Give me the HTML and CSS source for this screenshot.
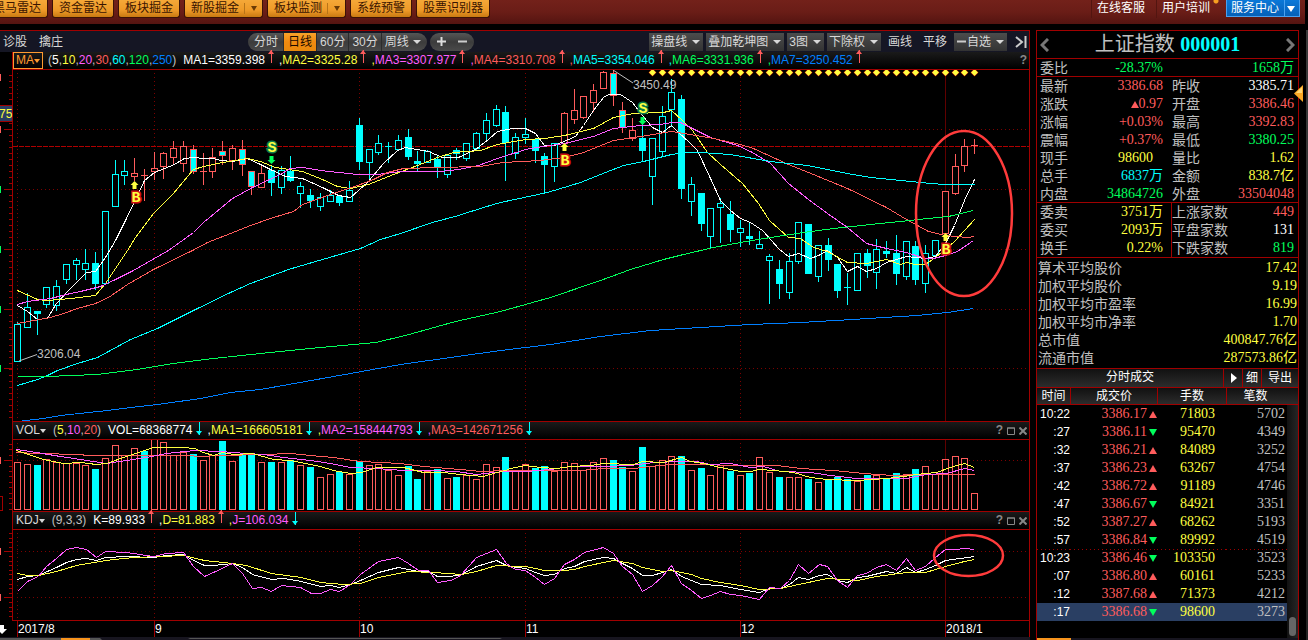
FILE: index.html
```html
<!DOCTYPE html>
<html lang="zh-CN">
<head>
<meta charset="utf-8">
<title>上证指数 000001</title>
<link rel="stylesheet" href="styles.css">
</head>
<body>
<header class="topbar">
  <nav class="tools">
    <button class="gold">黑马雷达</button>
    <button class="gold">资金雷达</button>
    <button class="gold">板块掘金</button>
    <button class="gold split">新股掘金<i class="caret"></i></button>
    <button class="gold split">板块监测<i class="caret"></i></button>
    <button class="gold">系统预警</button>
    <button class="gold">股票识别器</button>
  </nav>
  <nav class="account">
    <a href="#">在线客服</a>
    <a href="#" class="has-dot">用户培训</a>
    <button class="service">服务中心<i class="caret"></i></button>
  </nav>
</header>
<div class="workspace">
  <main class="charts">
    <div class="toolbar">
      <a href="#">诊股</a>
      <a href="#">擒庄</a>
      <div class="pill periods">
        <button>分时</button><button class="on">日线</button><button>60分</button><button>30分</button><button>周线<i class="caret"></i></button>
      </div>
      <div class="pill zoomers">
        <button aria-label="放大"><svg width="9" height="9"><path d="M0 4.5h9M4.5 0v9" stroke="#ddd" stroke-width="2"/></svg></button>
        <button aria-label="缩小"><svg width="9" height="9"><path d="M0 4.5h9" stroke="#ccc" stroke-width="2"/></svg></button>
      </div>
      <div class="options">
        <button class="drop">操盘线<i class="caret"></i></button>
        <button class="drop">叠加乾坤图<i class="caret"></i></button>
        <button class="drop">3图<i class="caret"></i></button>
        <button class="drop">下除权<i class="caret"></i></button>
        <a href="#">画线</a>
        <a href="#">平移</a>
        <button class="drop tight"><svg width="9" height="9"><path d="M0 4.5h9" stroke="#ccc" stroke-width="2"/></svg>自选<i class="caret"></i></button>
        <button class="collapse" aria-label="收起"><svg width="12" height="12"><path d="M1 1l6 5-6 5M10.500 0v12" fill="none" stroke="#ccc" stroke-width="2"/></svg></button>
      </div>
    </div>

    <div class="indicator first">
      <button class="name boxed">MA<i class="caret"></i></button>
      <span class="params">(<b class="w">5</b>,<b class="y">10</b>,<b class="m">20</b>,<b class="r">30</b>,<b class="c">60</b>,<b class="g">120</b>,<b class="b">250</b>)</span>
      <span class="values"><span class="w">MA1=3359.398<i class="up"></i>,</span><span class="y">MA2=3325.28<i class="up"></i>,</span><span class="m">MA3=3307.977<i class="up"></i>,</span><span class="r">MA4=3310.708<i class="up"></i>,</span><span class="c">MA5=3354.046<i class="up"></i>,</span><span class="g">MA6=3331.936<i class="up"></i>,</span><span class="b">MA7=3250.452<i class="up"></i></span></span>
      <span class="panel-tools"><button>?</button></span>
    </div>
    <svg class="plot" id="price" viewBox="0 70 1030 351"></svg>

    <div class="indicator">
      <button class="name">VOL<i class="caret"></i></button>
      <span class="params">(<b class="y">5</b>,<b class="m">10</b>,<b class="r">20</b>)</span>
      <span class="values"><span class="w">VOL=68368774<i class="down"></i>,</span><span class="y">MA1=166605181<i class="down"></i>,</span><span class="m">MA2=158444793<i class="down"></i>,</span><span class="r">MA3=142671256<i class="down"></i></span></span>
      <span class="panel-tools"><button>?</button><button aria-label="最大化"><svg width="8" height="8"><path d="M.5 1h7v6.500h-7zM0 1h8" fill="none" stroke="#888"/></svg></button><button aria-label="关闭"><svg width="8" height="8"><path d="M0.500 .5l7 7M7.500 .5l-7 7" stroke="#888" stroke-width="2"/></svg></button></span>
    </div>
    <svg class="plot" id="volume" viewBox="0 440 1030 71"></svg>

    <div class="indicator">
      <button class="name">KDJ<i class="caret"></i></button>
      <span class="params">(9,3,3)</span>
      <span class="values"><span class="w">K=89.933<i class="up"></i>,</span><span class="y">D=81.883<i class="up"></i>,</span><span class="m">J=106.034<i class="down"></i></span></span>
      <span class="panel-tools"><button>?</button><button aria-label="最大化"><svg width="8" height="8"><path d="M.5 1h7v6.500h-7zM0 1h8" fill="none" stroke="#888"/></svg></button><button aria-label="关闭"><svg width="8" height="8"><path d="M0.500 .5l7 7M7.500 .5l-7 7" stroke="#888" stroke-width="2"/></svg></button></span>
    </div>
    <svg class="plot" id="kdj" viewBox="0 530 1030 90"></svg>
    <svg class="plot" id="dates" viewBox="0 620 1030 17"></svg>
    <svg class="plot" viewBox="0 0 1030 3"><path fill="#17151f" d="M0 0h1030v3H0z"/><path fill="#555" d="M0 1h100l2 2H0zM188 2l2-1h310l2 1z"/><path fill="#f7941d" d="M61 1h29v2H61z"/></svg>
  </main>

  <aside class="side">
    <section class="quote">
      <h1 class="title"><button aria-label="上一个"><svg width="9" height="14"><path d="M8 1L2 7l6 6" fill="none" stroke="#777" stroke-width="3"/></svg></button><span>上证指数 <b>000001</b></span><button aria-label="下一个"><svg width="9" height="14"><path d="M1 1l6 6-6 6" fill="none" stroke="#777" stroke-width="3"/></svg></button></h1>
      <div class="pairs ruled">
        <div><span>委比</span><b class="g">-28.37%</b></div><div><b class="g">1658万</b></div>
      </div>
      <div class="pairs ruled">
        <div><span>最新</span><b class="r">3386.68</b></div><div><span>昨收</span><b class="w">3385.71</b></div>
        <div><span>涨跌</span><b class="r"><i class="tri-up"></i>0.97</b></div><div><span>开盘</span><b class="r">3386.46</b></div>
        <div><span>涨幅</span><b class="r">+0.03%</b></div><div><span>最高</span><b class="r">3392.83</b></div>
        <div><span>震幅</span><b class="r">+0.37%</b></div><div><span>最低</span><b class="g">3380.25</b></div>
        <div><span>现手</span><b class="y lot">98600</b></div><div><span>量比</span><b class="y">1.62</b></div>
        <div><span>总手</span><b class="c">6837万</b></div><div><span>金额</span><b class="y">838.7亿</b></div>
        <div><span>内盘</span><b class="g">34864726</b></div><div><span>外盘</span><b class="r">33504048</b></div>
      </div>
      <div class="pairs split-line">
        <div><span>委卖</span><b class="y">3751万</b></div><div><span>上涨家数</span><b class="r">449</b></div>
        <div><span>委买</span><b class="y">2093万</b></div><div><span>平盘家数</span><b class="w">131</b></div>
        <div><span>换手</span><b class="y">0.22%</b></div><div><span>下跌家数</span><b class="g">819</b></div>
      </div>
      <div class="averages">
        <div><span>算术平均股价</span><b>17.42</b></div>
        <div><span>加权平均股价</span><b>9.19</b></div>
        <div><span>加权平均市盈率</span><b>16.99</b></div>
        <div><span>加权平均市净率</span><b>1.70</b></div>
        <div><span>总市值</span><b>400847.76亿</b></div>
        <div><span>流通市值</span><b>287573.86亿</b></div>
      </div>
      <div class="trade-head"><h2>分时成交</h2><button aria-label="播放"><svg width="6" height="10"><path d="M0 0l6 5-6 5z" fill="#fff"/></svg></button><button>细</button><button>导出</button></div>
      <div class="trades">
        <table>
          <thead><tr><th>时间</th><th>成交价</th><th>手数</th><th>笔数</th></tr></thead>
          <tbody>
            <tr><td>10:22</td><td>3386.17<i class="tri-up"></i></td><td>71803</td><td>5702</td></tr>
            <tr><td>:27</td><td>3386.11<i class="tri-down"></i></td><td>95470</td><td>4349</td></tr>
            <tr><td>:32</td><td>3386.21<i class="tri-up"></i></td><td>84089</td><td>3252</td></tr>
            <tr><td>:37</td><td>3386.23<i class="tri-up"></i></td><td>63267</td><td>4754</td></tr>
            <tr><td>:42</td><td>3386.72<i class="tri-up"></i></td><td>91189</td><td>4746</td></tr>
            <tr><td>:47</td><td>3386.67<i class="tri-down"></i></td><td>84921</td><td>3351</td></tr>
            <tr><td>:52</td><td>3387.27<i class="tri-up"></i></td><td>68262</td><td>5193</td></tr>
            <tr><td>:57</td><td>3386.84<i class="tri-down"></i></td><td>89992</td><td>4519</td></tr>
            <tr class="minute"><td>10:23</td><td>3386.46<i class="tri-down"></i></td><td>103350</td><td>3523</td></tr>
            <tr><td>:07</td><td>3386.80<i class="tri-up"></i></td><td>60161</td><td>5233</td></tr>
            <tr><td>:12</td><td>3387.68<i class="tri-up"></i></td><td>71373</td><td>4212</td></tr>
            <tr class="current"><td>:17</td><td>3386.68<i class="tri-down"></i></td><td>98600</td><td>3273</td></tr>
          </tbody>
        </table>
        <div class="scroll"><i></i></div>
      </div>
      <div class="tab-strip"></div>
    </section>
    <svg class="flag" width="9" height="17"><path d="M0 8.500L9 0v17z" fill="#f9a825"/><path d="M2 8l6-6v6z" fill="#ffd773"/></svg>
  </aside>
</div>
<script src="chart.js"></script>
</body>
</html>
```
FILE: styles.css
```css
* { box-sizing: border-box; }
body {
  margin: 0;
  min-height: 100vh;
  display: flex;
  flex-direction: column;
  overflow-x: hidden;
  background: #000;
  color: #c0c0c0;
  font: 12px/18px "Liberation Sans", "Noto Sans CJK SC", sans-serif;
}
button {
  margin: 0;
  padding: 0;
  border: 0;
  background: none;
  color: inherit;
  font: inherit;
  white-space: nowrap;
}
a { color: inherit; text-decoration: none; white-space: nowrap; }
svg { display: block; flex: none; }
b { font-weight: normal; }
h1, h2 { margin: 0; font-weight: normal; }

.w { color: #fff; }
.y { color: #ffff40; }
.m { color: #ff5cff; }
.r { color: #ff5c5c; }
.c { color: #00ffff; }
.g { color: #00ff5c; }
.b { color: #007fff; }

.caret {
  display: inline-block;
  border: 4px solid transparent;
  border-top-color: currentColor;
  border-bottom: 0;
  vertical-align: middle;
}

/* top bar */
.topbar {
  display: flex;
  justify-content: space-between;
  height: 24px;
  margin: 0 3px 6px 0;
  background: linear-gradient(#73211a, #6a1d17 50%, #541411);
}
.tools { display: flex; gap: 4px; margin-left: -14px; }
.gold {
  height: 18px;
  padding: 0 6px 1px;
  border: 1px solid #3c1206;
  border-top: 0;
  border-radius: 0 0 3px 3px;
  background: linear-gradient(#f5a838, #ee9a28 60%, #c97a12);
  color: #3a1400;
  line-height: 16px;
}
.split {
  padding-right: 5px;
  background:
    linear-gradient(#b87418, #b87418) right 17px top 3px / 1px 11px no-repeat,
    linear-gradient(#f5a838, #ee9a28 60%, #c97a12);
}
.split .caret { margin-left: 12px; border-width: 5px 3px 0; color: #6b3b05; }
.account { display: flex; padding-right: 5px; color: #fff; line-height: 16px; }
.account a { padding: 0 11px 0 5px; border-left: 1px solid #521510; height: 18px; }
.account .has-dot { padding-right: 16px; background: radial-gradient(circle at 59px 1px, #f7a020 2px, transparent 3px); }
.service {
  height: 17px;
  padding: 0 2px 0 4px;
  border: 1px solid #4aa0ee;
  border-top: 0;
  background:
    linear-gradient(#4aa0ee, #4aa0ee) right 14px top / 1px 100% no-repeat,
    linear-gradient(#0b78d8, #0560b8);
  color: #fff;
  line-height: 16px;
}
.service .caret { margin-left: 8px; border-width: 6px 4px 0; margin-right: 2px; }

.workspace { display: flex; flex: 1; align-items: flex-start; }
.charts { flex: 1; min-width: 0; }

/* chart toolbar */
.toolbar {
  display: flex;
  align-items: center;
  height: 22px;
  border-top: 1px solid #a00000;
  border-right: 1px solid #a00000;
  background: #151624;
  color: #d8d8d8;
}
.toolbar > a { margin-left: 3px; }
.toolbar > a + a { margin-left: 12px; }
.pill {
  display: flex;
  align-items: center;
  height: 18px;
  overflow: hidden;
  border-radius: 9px;
  background: linear-gradient(#555, #3c3c3c 50%, #4a4a4a);
}
.periods { margin-left: 185px; }
.periods button { height: 18px; padding: 0 3px; border-left: 1px solid #2c2c2c; }
.periods button:first-child { padding-left: 6px; padding-right: 5px; border: 0; }
.periods button:last-child { padding-right: 6px; }
.periods .caret { margin-left: 4px; }
.periods .on { padding: 0 4px; background: linear-gradient(#f9a22a, #f08a10 50%, #e8890c); color: #1a0a00; }
.zoomers { margin-left: 3px; padding: 0 7px; gap: 12px; }
.options { display: flex; align-items: center; margin-left: auto; padding-right: 2px; gap: 3px; }
.drop {
  display: flex;
  align-items: center;
  gap: 5px;
  height: 18px;
  padding: 0 3px 0 2px;
  background: linear-gradient(#4c4c4c, #333);
}
.tight { gap: 1px; padding-left: 3px; }
.tight .caret { margin-left: 4px; }
.options a { padding: 0 4px; }
.collapse { margin-left: 5px; }

/* indicator headings */
.indicator {
  display: flex;
  align-items: center;
  height: 19px;
  margin-left: 12px;
  padding-left: 3px;
  border: 1px solid #a00000;
  background: linear-gradient(#1a1a1a, #000);
  line-height: 17px;
  white-space: nowrap;
}
.indicator.first { height: 18px; border-top: 0; padding-left: 0; }
.name { color: #d8d8d8; }
.name .caret { border-width: 4px 3px 0; }
.params { margin-left: 7px; }
.boxed { height: 17px; padding: 0 2px; border: 1px solid #ff9a30; color: #ff9a30; line-height: 15px; }
.boxed + .params { margin-left: 5px; }
.values { margin-left: 7px; }
.up, .down { position: relative; display: inline-block; width: 14px; height: 13px; vertical-align: -1px; }
.up { color: #ff5c5c; }
.down { width: 15px; color: #00ffff; }
.up::before, .down::before {
  content: "";
  position: absolute;
  left: 6px;
  width: 1px;
  height: 13px;
  background: currentColor;
}
.up::after, .down::after {
  content: "";
  position: absolute;
  left: 3px;
  border: solid transparent;
}
.up::before { top: -2px; }
.up::after { top: -2px; border-width: 0 3px 4px; border-bottom-color: currentColor; }
.down::after { bottom: 0; border-width: 4px 3px 0; border-top-color: currentColor; }
.panel-tools { display: flex; align-items: center; gap: 4px; margin-left: auto; padding-right: 2px; color: #888; }
.panel-tools button { font-weight: bold; }
.plot { width: 100%; height: auto; }
.plot text { font: 12px "Liberation Sans", sans-serif; }
.plot .signal { font: bold 15px "Liberation Mono", monospace; paint-order: stroke; stroke-width: 3px; text-anchor: middle; }

/* quote panel */
.side {
  position: relative;
  flex: none;
  width: 278px;
  padding: 0 9px 0 6px;
  background: linear-gradient(#3a3a3a, #222) right / 2px 100% no-repeat;
}
.quote { border: 1px solid #a00000; border-bottom: 0; }
.title {
  display: flex;
  align-items: center;
  justify-content: space-between;
  height: 28px;
  padding: 0 3px;
  border-bottom: 1px solid #a00000;
  font-size: 20px;
  line-height: 27px;
}
.title b { color: #00ffff; font-family: "Liberation Serif", serif; font-weight: bold; }
.pairs { display: grid; grid-template-columns: 134px 1fr; border-bottom: 1px solid #a00000; font-size: 14px; }
.pairs > div { display: flex; justify-content: space-between; height: 18px; padding: 0 8px 0 3px; }
.pairs > div:nth-child(even) { padding: 0 4px 0 1px; }
.ruled > div:nth-last-child(-n+2) { height: 17px; }
.pairs > div > b:only-child { margin-left: auto; }
.pairs b, .averages b, td { font-family: "Liberation Serif", "Noto Sans CJK SC", serif; font-size: 14px; }
.split-line > div:nth-child(even) { padding-left: 0; border-left: 1px solid #a00000; }
.pairs .lot { margin-right: 10px; }
.averages { padding: 1px; border-bottom: 1px solid #a00000; font-size: 14px; }
.averages div { display: flex; justify-content: space-between; height: 18px; }
.averages b { color: #ffff40; }
.tri-up, .tri-down { display: inline-block; margin-left: 2px; border: solid transparent; }
.tri-up { border-width: 0 4px 7px; border-bottom-color: #ff5c5c; }
.tri-down { border-width: 7px 4px 0; border-top-color: #00ff5c; }
.trade-head { display: flex; height: 19px; background: linear-gradient(#111, #2c2c2c); border-bottom: 1px solid #a00000; color: #fff; line-height: 17px; }
.trade-head h2 { flex: 1; font-size: 12px; text-align: center; }
.trade-head button { display: flex; align-items: center; padding: 0 3px; border-left: 1px solid #a00000; }
.trade-head button:nth-of-type(1) { padding: 0 5px 0 7px; }
.trade-head button:last-child { padding: 0 6px; }
.trades { position: relative; }
table { width: 100%; border-spacing: 0; table-layout: fixed; }
th {
  height: 17px;
  padding: 0;
  border-bottom: 1px solid #a00000;
  background: linear-gradient(#111, #2c2c2c);
  color: #fff;
  font-weight: normal;
  line-height: 16px;
}
th + th { border-left: 1px solid #a00000; }
th:nth-child(1) { width: 33px; }
th:nth-child(2) { width: 87px; }
th:nth-child(3) { width: 69px; }
th:nth-child(4) { padding-right: 14px; }
td { height: 18px; padding: 0; text-align: right; }
td:nth-child(1) { color: #fff; font: 12px/18px "Liberation Sans", sans-serif; }
td:nth-child(2) { color: #ff5c5c; }
td:nth-child(3) { padding-right: 11px; color: #ffff40; }
td:nth-child(4) { padding-right: 13px; color: #c0c0c0; }
.minute td {
  background: repeating-linear-gradient(90deg, #a00000 0 1px, transparent 1px 4px) top / 100% 1px no-repeat;
}
.current td { background: #2a3f63; }
.scroll { position: absolute; top: 17px; right: 0; bottom: -17px; width: 11px; padding: 0 2px; background: linear-gradient(90deg, #111, #262626); }
.scroll i { display: block; height: 19px; margin-top: 212px; border-radius: 4px; background: #666; }
.tab-strip { height: 2px; margin-top: 17px; background: linear-gradient(90deg, #f7941d 34px, #17151f 34px); }
.flag { position: absolute; right: 5px; top: 55px; }
```
FILE: chart.js
```js
const RED = '#ff5c5c', CYAN = '#00ffff', YELLOW = '#ffff40', PINK = '#ff5cff',
  GREEN = '#00ff5c', BLUE = '#007fff', FRAME = '#a00000', DIM = '#600000', DOTS = '#7c0000';

// high, body top, body bottom, low, kind
// h: hollow, f: filled, r: red hollow, m: red outline with cyan fill
const candles = [
  [322,324,361,361,'h'],[293,307,327,327,'h'],[311,311,313,334,'f'],[287,287,304,307,'h'],[280,286,305,310,'h'],
  [264,264,279,283,'h'],[258,260,264,279,'h'],[249,263,269,279,'h'],[252,263,283,289,'f'],[211,211,283,283,'h'],
  [160,174,206,206,'h'],[160,171,175,184,'h'],[158,173,176,180,'r'],[169,175,176,200,'r'],[152,168,171,179,'r'],
  [152,153,166,178,'r'],[141,148,157,163,'r'],[141,146,163,171,'r'],[145,149,171,173,'m'],[153,171,172,184,'r'],
  [148,157,171,177,'r'],[141,151,155,164,'m'],[145,148,160,169,'r'],[140,149,164,175,'m'],[171,171,186,194,'m'],
  [164,173,187,187,'r'],[165,170,182,195,'f'],[166,170,187,193,'h'],[156,171,180,181,'f'],[182,186,193,207,'h'],
  [189,195,200,207,'f'],[193,197,206,210,'h'],[190,195,201,201,'h'],[195,196,202,205,'f'],[181,190,201,201,'h'],
  [118,125,161,169,'f'],[149,149,162,178,'h'],[135,143,152,154,'h'],[142,146,147,162,'f'],[135,140,149,150,'h'],
  [129,137,156,159,'f'],[151,161,163,170,'f'],[150,151,162,162,'h'],[155,159,166,177,'f'],[154,155,174,177,'h'],
  [148,150,153,159,'f'],[143,143,158,160,'h'],[132,133,148,150,'h'],[113,120,133,139,'h'],[105,109,125,126,'h'],
  [106,112,142,180,'f'],[133,137,153,158,'h'],[118,134,137,143,'h'],[138,139,150,162,'f'],[153,156,164,193,'f'],
  [143,143,166,181,'h'],[112,113,143,143,'r'],[89,110,119,123,'r'],[96,96,117,118,'r'],[84,90,102,111,'r'],
  [71,72,88,88,'r'],[70,73,95,105,'m'],[102,110,127,132,'m'],[118,130,138,140,'r'],[124,138,150,161,'f'],
  [138,138,176,204,'h'],[106,116,151,156,'h'],[79,92,109,126,'h'],[95,99,188,198,'f'],[177,184,201,215,'h'],
  [193,193,223,230,'f'],[208,208,236,248,'h'],[198,203,207,242,'h'],[201,214,229,241,'f'],[220,228,232,246,'h'],
  [222,236,238,244,'f'],[231,244,248,248,'h'],[254,256,260,303,'h'],[260,269,283,298,'f'],[253,261,292,298,'h'],
  [222,222,261,263,'h'],[224,224,273,273,'f'],[245,245,276,281,'h'],[238,245,259,270,'f'],[264,264,290,297,'f'],
  [273,287,288,304,'f'],[253,253,290,290,'h'],[249,253,265,277,'f'],[239,249,272,288,'h'],[241,251,253,257,'f'],
  [235,253,273,284,'f'],[241,241,276,279,'h'],[241,246,279,284,'f'],[245,253,283,292,'h'],[240,240,255,256,'h'],
  [191,191,233,235,'r'],[154,166,193,194,'r'],[139,146,165,171,'r'],[139,145,146,153,'r']
];

// bar heights in pixels; a leading minus marks a falling (filled) day
const volumes = [48,46,-45,51,48,47,47,45,-41,52,65,55,62,-59,71,68,55,58,-56,50,55,-69,49,-55,-56,48,-48,48,-50,45,
  -43,33,36,-38,36,-49,45,46,40,35,-44,-31,39,-41,32,-33,35,31,46,43,-53,39,46,-42,-44,39,48,47,40,48,
  52,-50,-43,39,-63,44,50,54,-54,40,-42,35,45,-39,35,-37,53,38,-33,33,33,-31,28,-30,-33,-31,29,-35,35,-32,
  -37,36,-41,44,36,51,54,52,17];

const averages = [
  ['#ffffff', '17,305 27,311 37,319 47,318 56,303 68,290 86,272 95,271 105,257 115,240 125,220 144,180 154,172 174,164 184,158 193,157 203,158 213,158 220,160 232,161 247,158 260,164 270,169 285,176 302,178 322,187 338,195 350,197 367,182 383,163 397,150 405,147 428,151 442,157 458,157 475,149 488,139 497,131 512,128 525,128 535,133 544,145 554,145 575,136 583,125 593,110 603,97 608,94 620,94 632,102 642,115 652,127 662,132 671,125 677,131 690,143 697,150 710,178 720,200 730,210 740,218 750,222 762,230 779,249 788,256 798,253 810,258 818,255 827,250 837,257 847,271 857,266 866,271 876,268 886,262 906,256 925,258 935,256 945,243 954,225 964,200 974,179'],
  [YELLOW, '17,290 37,299 47,300 70,298 95,295 105,283 127,250 135,237 153,213 173,193 193,169 203,166 222,162 247,158 260,161 275,167 302,171 322,179 337,186 350,188 368,184 393,174 417,165 437,157 453,152 480,150 497,144 525,139 544,138 564,135 593,128 613,117 633,113 663,112 671,110 682,120 692,130 707,152 720,164 742,183 758,203 769,220 788,237 800,238 813,247 827,251 847,262 866,263 886,259 900,264 906,262 915,264 925,264 935,257 954,241 974,219'],
  [PINK, '17,304 27,301 50,298 70,293 80,291 100,286 113,280 133,270 147,262 168,250 193,232 203,222 232,198 252,187 267,180 280,174 290,168 302,167 320,170 357,174 377,174 400,171 440,171 458,169 478,165 497,158 525,149 543,146 564,143 593,136 613,128 640,125 660,124 671,122 680,122 692,128 710,137 737,145 752,152 770,163 788,183 808,199 827,213 847,227 866,243 886,248 906,252 925,258 933,258 945,255 957,251 973,240'],
  [RED, '17,323 50,317 63,313 77,308 95,303 108,297 127,284 153,269 192,250 207,242 230,233 250,225 273,217 293,211 302,204 330,194 357,185 373,179 387,172 403,168 437,167 480,166 502,162 540,160 564,157 583,152 613,140 640,136 671,131 690,134 713,138 740,144 753,148 788,164 808,172 847,188 886,207 906,219 917,225 928,231 945,235 967,237 974,236'],
  [CYAN, '17,385 37,379 47,375 57,370 77,363 97,357 130,339 157,328 193,310 230,292 250,283 288,269 322,259 360,248 380,239 400,233 432,222 458,215 483,207 500,202 547,192 580,182 600,174 623,165 643,161 671,154 687,152 700,152 730,154 770,161 807,165 847,173 870,177 920,182 943,184 974,184'],
  [GREEN, '17,376 47,376 70,375 97,374 137,369 173,363 213,358 260,353 320,347 375,342 405,335 455,321 500,311 550,297 600,280 630,269 663,259 683,254 713,247 740,242 770,237 803,232 833,228 870,224 900,221 927,218 948,216 973,210'],
  [BLUE, '17,421 43,418 60,415 107,410 130,407 157,404 200,398 230,392 260,389 350,373 400,364 500,350 550,344 600,336 650,330 700,327 750,324 800,322 852,319 883,317 917,315 947,312 973,308']
];

// The lower panes keep their samples in thirds of a pixel, in two runs:
// the first starts at x = 0, the second at x = 510.
const volumeAverages = [
  [RED, '50,96 110,100 240,104 260,107 460,107 560,105 600,109 660,106 790,104 870,101 930,106 1000,113 1080,124 1200,130 1270,140 1380,148 1440,153 1520,152',
    '0,152 46,150 120,152 210,150 280,146 370,145 420,140 480,133 560,132 700,137 800,137 870,145 970,150 1060,160 1150,167 1250,164 1393,163'],
  [PINK, '50,88 110,97 180,109 240,118 320,131 380,120 440,113 500,101 583,91 660,94 740,99 790,103 850,112 930,120 990,131 1050,142 1130,145 1210,150 1300,150 1370,155 1430,164 1480,158 1520,155',
    '0,154 46,153 120,148 180,140 280,139 360,136 430,128 514,124 560,124 600,132 660,130 720,142 760,138 810,153 900,158 960,166 1040,175 1190,176 1250,164 1310,159 1363,145 1393,152'],
  [YELLOW, '50,92 130,118 190,130 240,126 290,133 320,131 380,110 460,83 550,83 583,85 610,98 640,105 667,98 700,103 757,101 820,117 870,122 960,138 1000,152 1050,160 1085,157 1130,142 1210,142 1270,156 1330,158 1380,164 1450,168 1490,158 1515,150',
    '0,146 46,136 90,141 140,146 180,140 240,137 280,129 370,133 397,124 460,127 514,113 540,123 580,130 630,142 690,154 720,153 748,147 790,152 850,157 900,172 950,179 1040,181 1130,174 1180,168 1220,162 1280,156 1330,139 1363,130 1393,143']
];
const kdj = [
  ['#ffffff', '52,478 82,470 115,465 170,443 200,427 230,418 260,414 288,421 316,412 380,409 460,411 500,406 550,404 580,421 612,436 640,436 697,430 727,443 757,463 814,478 850,475 905,484 962,499 992,496 1018,502 1050,494 1080,481 1135,457 1195,442 1255,453 1285,453 1312,469 1350,468 1385,462 1430,439 1490,421 1518,435',
    '0,440 46,446 76,457 103,466 133,463 163,445 193,438 223,424 280,412 310,415 337,430 367,445 397,466 427,466 457,458 485,448 514,469 575,494 631,496 691,508 748,517 778,505 810,505 838,493 865,471 895,479 927,467 952,463 982,480 1012,487 1042,472 1070,468 1130,454 1160,460 1189,442 1216,456 1246,448 1275,436 1306,421 1393,409'],
  [YELLOW, '52,460 82,466 115,465 170,455 230,436 316,421 400,412 480,410 550,406 612,421 697,429 740,435 814,459 905,472 962,487 1030,493 1080,490 1135,472 1225,454 1300,456 1385,463 1430,454 1490,436 1518,437',
    '0,438 46,439 76,444 103,452 163,452 193,448 223,438 310,421 367,430 397,442 457,454 485,451 545,462 575,474 631,487 691,496 748,508 810,506 865,493 952,475 1042,480 1100,468 1189,457 1246,456 1306,440 1363,424 1393,418'],
  [PINK, '52,515 82,485 115,470 140,438 170,416 200,387 230,382 258,387 288,412 316,394 380,397 460,410 500,400 550,398 580,440 612,470 640,458 697,430 727,460 757,506 785,502 814,514 845,496 900,502 933,520 962,520 992,508 1018,514 1050,494 1080,463 1135,424 1195,411 1225,430 1255,451 1285,450 1312,487 1350,480 1372,472 1385,463 1430,412 1490,388 1518,430',
    '0,440 16,447 46,452 76,472 103,493 133,475 163,432 193,418 223,398 280,382 310,400 337,438 367,463 397,514 427,496 457,470 485,436 514,490 544,512 575,536 601,526 631,514 661,523 691,526 748,538 778,503 810,505 838,482 865,433 895,459 927,432 952,440 982,480 1012,501 1042,467 1070,459 1100,442 1130,433 1160,451 1189,414 1216,452 1246,440 1275,411 1306,388 1340,387 1363,384 1393,388']
];

const months = [[0, '2017/8'], [14, '9'], [35, '10'], [52, '11'], [74, '12'], [95, '2018/1']];
const xAt = i => 17 + Math.round(i * 9.766);
const rect = (x, y, w, h, fill) => `<rect x="${x}" y="${y}" width="${w}" height="${h}" fill="${fill}"/>`;
const line = (x1, y1, x2, y2, color, dash = '') =>
  `<path d="M${x1} ${y1}L${x2} ${y2}" stroke="${color}" stroke-dasharray="${dash}"/>`;
const curve = (color, points) =>
  `<polyline points="${points}" fill="none" stroke="${color}" shape-rendering="crispEdges" transform="translate(.5 .5)"/>`;
const box = (x, y, w, h, color, fill) =>
  `<rect x="${x + .5}" y="${y + .5}" width="${w - 1}" height="${h - 1}" stroke="${color}" fill="${fill}"/>`;

function merge(first, second) {
  const part = (run, x0) => run.split(' ').map(p => {
    const [x, y] = p.split(',').map(Number);
    return [Math.floor(x0 + x / 3), Math.floor(420 + y / 3)].join();
  });
  return part(first, 0).concat(part(second, 510)).join(' ');
}

function frame(top, bottom, grid, ticks) {
  let out = '';
  for (const y of grid) out += line(17, y + .5, 1029, y + .5, DOTS, '1 3') + line(4, y + .5, 12, y + .5, FRAME);
  for (const [i] of months) {
    const x = xAt(i) + .5;
    out += i === 95 ? line(x, top, x, bottom, DIM) : line(x, top + 3, x, bottom, DOTS, '1 3');
  }
  for (const y of ticks) out += line(9, y + .5, 12, y + .5, FRAME);
  return out + line(12.5, top, 12.5, bottom, FRAME) + line(1029.5, top, 1029.5, bottom, FRAME);
}
const range = (from, to, step) => {
  const list = [];
  for (let v = from; v < to; v += step) list.push(Math.round(v));
  return list;
};
const arrow = (x, y, up) => up
  ? `<path fill="${YELLOW}" d="M${x + .5} ${y - 4}l4 4h-2v4h-4v-4h-2z"/>`
  : `<path fill="${GREEN}" d="M${x + .5} ${y + 4}l4-4h-2v-4h-4v4h-2z"/>`;
const signal = (x, y, letter) => letter === 'B'
  ? `<text class="signal" x="${x}" y="${y}" fill="${YELLOW}" stroke="#d01010">B</text>`
  : `<text class="signal" x="${x}" y="${y}" fill="${YELLOW}" stroke="#0a7a4a">S</text>`;

function drawPrice() {
  let out = frame(70, 421, [129, 189, 249, 309, 368], range(75, 421, 6));
  out += line(13, 146.5, 1029, 146.5, '#b00000', '5 1');
  [[74, RED], [126, RED], [186, GREEN], [246, GREEN], [306, GREEN], [365, GREEN]].forEach(([y, c]) => { out += rect(0, y, 1, 7, c); });
  out += box(-1, 105, 14, 17, FRAME, '#2a3f63') + `<text x="-1" y="118" fill="${YELLOW}">75</text>`;
  candles.forEach(([high, top, bottom, low, kind], i) => {
    const x = xAt(i), edge = kind === 'r' || kind === 'm' ? RED : CYAN;
    const fill = kind === 'f' || kind === 'm' ? CYAN : '#000';
    out += rect(x, high, 1, low - high + 1, edge);
    out += bottom - top < 2 ? rect(x - 3, top, 7, 1, edge) : box(x - 3, top, 7, bottom - top + 1, edge, fill);
  });
  for (const [color, points] of averages) out += curve(color, points);
  for (let i = 65; i < 99; i++) {
    const x = xAt(i) + .5;
    out += `<path d="M${x - 4} 72.500L${x} 68.500l4 4-4 4z" fill="#c00000"/><path d="M${x - 3.5} 72.500l3.500-3.500 3.500 3.500-3.500 3.500z" fill="${YELLOW}"/>`;
  }
  out += line(19, 361, 37, 354.500, '#c0c0c0') + '<text x="37" y="358" fill="#c0c0c0">3206.04</text>';
  out += line(613, 70, 633, 83, '#c0c0c0') + '<text x="633" y="89" fill="#c0c0c0">3450.49</text>';
  out += arrow(134, 185, true) + signal(136, 202, 'B') + arrow(564, 147, true) + signal(565, 165, 'B');
  out += arrow(945, 237, true) + signal(946, 254, 'B');
  out += arrow(271, 160, false) + signal(272, 152, 'S') + arrow(642, 121, false) + signal(643, 113, 'S');
  out += '<ellipse cx="964" cy="213.500" rx="48" ry="82.500" fill="none" stroke="#ff3b3b" stroke-width="2.500"/>';
  document.getElementById('price').innerHTML = out;
}

function drawVolume() {
  let out = frame(440, 511, [460], range(444, 510, 5.4));
  out += rect(0, 457, 1, 7, RED) + box(-3, 496, 6, 15, FRAME, 'none');
  volumes.forEach((v, i) => {
    const h = Math.abs(v), x = xAt(i) - 3;
    out += v < 0 ? rect(x, 510 - h, 7, h, CYAN) : box(x, 510 - h, 7, h, RED, '#000');
  });
  for (const [color, a, b] of volumeAverages) out += curve(color, merge(a, b));
  document.getElementById('volume').innerHTML = out;
}

function drawKdj() {
  let out = frame(530, 620, [551, 597], range(533, 618, 4.6));
  out += rect(0, 548, 1, 7, RED) + rect(0, 594, 1, 7, RED);
  for (const [color, a, b] of kdj) out += curve(color, merge(a, b));
  out += '<ellipse cx="968.500" cy="555.500" rx="34.500" ry="20.500" fill="none" stroke="#ff3b3b" stroke-width="2.500"/>';
  document.getElementById('kdj').innerHTML = out;
}

function drawDates() {
  let out = line(12, 620.5, 1030, 620.5, FRAME) + line(1029.5, 620, 1029.5, 637, FRAME);
  out += '<path fill="#fff" d="M2 634l-5-5h3v-4h4v4h3z"/>';
  for (const [i, label] of months) {
    const x = xAt(i);
    out += line(x + .5, 620, x + .5, 637, FRAME) + `<text x="${x + 1}" y="633" fill="#fff">${label}</text>`;
  }
  document.getElementById('dates').innerHTML = out;
}

drawPrice();
drawVolume();
drawKdj();
drawDates();
```
